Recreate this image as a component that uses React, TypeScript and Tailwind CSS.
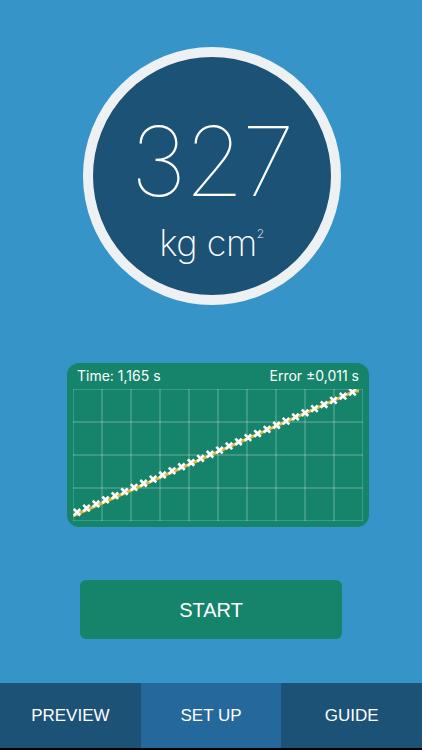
import React from "react";

const W = 290;
const H = 132;

function Chart() {
  const cols = Array.from({ length: 11 }, (_, i) => (i * W) / 10);
  const rows = Array.from({ length: 5 }, (_, i) => (i * H) / 4);
  const marks = Array.from({ length: 30 }, (_, i) => {
    const x = 4 + i * 9.5;
    const y = 125 - (x / 282) * 123;
    return { x, y };
  });
  return (
    <svg width={W} height={H} viewBox={`0 0 ${W} ${H}`} className="block">
      {cols.map((x, i) => (
        <line key={"c" + i} x1={x} y1={0} x2={x} y2={H} stroke="rgba(255,255,255,0.35)" strokeWidth={1} />
      ))}
      {rows.map((y, i) => (
        <line key={"r" + i} x1={0} y1={y} x2={W} y2={y} stroke="rgba(255,255,255,0.35)" strokeWidth={1} />
      ))}
      <polyline points="0,127 282,2 286,2" fill="none" stroke="#e3b83c" strokeWidth={3} />
      {marks.map((m, i) => (
        <g key={i} stroke="#ffffff" strokeWidth={2.6} strokeLinecap="square">
          <line x1={m.x - 2.3} y1={m.y - 2.3} x2={m.x + 2.3} y2={m.y + 2.3} />
          <line x1={m.x - 2.3} y1={m.y + 2.3} x2={m.x + 2.3} y2={m.y - 2.3} />
        </g>
      ))}
    </svg>
  );
}

export default function App() {
  return (
    <div
      className="w-[422px] h-[750px] flex flex-col bg-[#3794c9] overflow-hidden"
      style={{ fontFamily: "'Liberation Sans', Arial, sans-serif" }}
    >
      <div className="flex-1 flex flex-col items-center pt-[47px]">
        {/* gauge */}
        <div className="w-[258px] h-[258px] rounded-full bg-[#1d5277] border-[10px] border-[#eef1f3] flex flex-col items-center justify-center ml-[1px]">
          <div
            className="text-white text-[96px] leading-none font-thin tracking-[-2px] mt-[22px]"
            style={{ fontFamily: "Inter, 'Open Sans', sans-serif" }}
          >
            327
          </div>
          <div
            className="text-white text-[36px] leading-none font-extralight mt-[16px] tracking-[-0.5px] flex items-start"
            style={{ fontFamily: "Inter, 'Open Sans', sans-serif" }}
          >
            <span>kg cm</span>
            <span className="text-[12px] leading-none mt-[3px]">2</span>
          </div>
        </div>

        {/* chart card */}
        <div className="mt-[58px] w-[302px] h-[164px] rounded-[12px] bg-[#16846a] px-[6px] pt-[5px] ml-[14px]">
          <div
            className="flex justify-between text-white text-[14px] leading-[16px] px-[4px]"
            style={{ fontFamily: "Inter, 'Open Sans', sans-serif" }}
          >
            <span>Time: 1,165 s</span>
            <span>Error ±0,011 s</span>
          </div>
          <div className="mt-[5px]">
            <Chart />
          </div>
        </div>

        {/* start */}
        <button className="mt-[53px] w-[262px] h-[59px] rounded-[6px] bg-[#15846a] text-white text-[20px]">
          START
        </button>
      </div>

      <div className="h-[67px] flex border-b-2 border-black">
        <div className="flex-1 bg-[#1d5277] flex items-center justify-center text-white text-[17px]">PREVIEW</div>
        <div className="flex-1 bg-[#24689c] flex items-center justify-center text-white text-[17px]">SET UP</div>
        <div className="flex-1 bg-[#1d5277] flex items-center justify-center text-white text-[17px]">GUIDE</div>
      </div>
    </div>
  );
}
